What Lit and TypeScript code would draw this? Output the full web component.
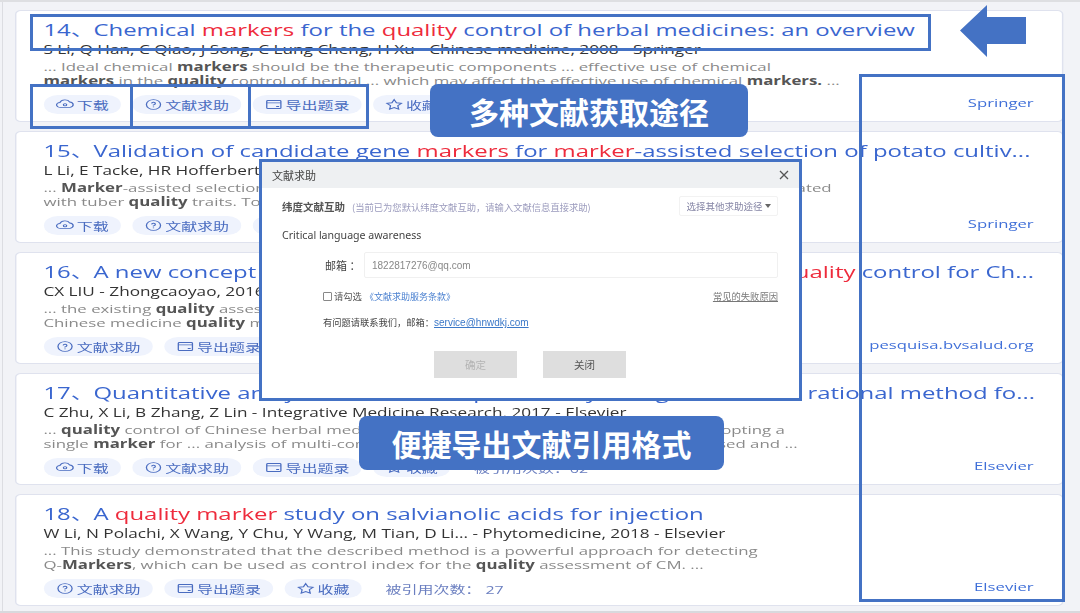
import { LitElement, html, css, svg } from "lit";
import { customElement } from "lit/decorators.js";

type Action = "down" | "help" | "export" | "star";
interface Item {
  n: number; title: string; authors: string; l1: string; l2: string;
  actions: Action[]; cited?: string; source: string;
}

const items: Item[] = [
  { n: 14, title: "Chemical *markers* for the *quality* control of herbal medicines: an overview",
    authors: "S Li, Q Han, C Qiao, J Song, C Lung Cheng, H Xu - Chinese medicine, 2008 - Springer",
    l1: "... Ideal chemical *markers* should be the therapeutic components ... effective use of chemical",
    l2: "*markers* in the *quality* control of herbal ... which may affect the effective use of chemical *markers.* ...",
    actions: ["down", "help", "export", "star"], cited: "被引用次数：540", source: "Springer" },
  { n: 15, title: "Validation of candidate gene *markers* for *marker*-assisted selection of potato cultiv...",
    authors: "L Li, E Tacke, HR Hofferbert, J Lübeck, J Strahwald - Theoretical and Applied Genetics",
    l1: "... *Marker*-assisted selection ... genes and quantitative trait loci that were found to be well associated",
    l2: "with tuber *quality* traits. To ...",
    actions: ["down", "help", "export", "star"], cited: "被引用次数：98", source: "Springer" },
  { n: 16, title: "A new concept on *quality marker* of Chinese materia medica: *Quality* control for Ch...",
    authors: "CX LIU - Zhongcaoyao, 2016 - pesquisa.bvsalud.org",
    l1: "... the existing *quality* assessment system ... based on the concept of the *quality* marker",
    l2: "Chinese medicine *quality* management ...",
    actions: ["help", "export", "star"], cited: "被引用次数：410", source: "pesquisa.bvsalud.org" },
  { n: 17, title: "Quantitative analysis of multi-components by a single *marker*: a rational method fo...",
    authors: "C Zhu, X Li, B Zhang, Z Lin - Integrative Medicine Research, 2017 - Elsevier",
    l1: "... *quality* control of Chinese herbal medicines has been greatly improved by simply adopting a",
    l2: "single *marker* for ... analysis of multi-components in herbal medicines, and was proposed and ...",
    actions: ["down", "help", "export", "star"], cited: "被引用次数：62", source: "Elsevier" },
  { n: 18, title: "A *quality marker* study on salvianolic acids for injection",
    authors: "W Li, N Polachi, X Wang, Y Chu, Y Wang, M Tian, D Li... - Phytomedicine, 2018 - Elsevier",
    l1: "... This study demonstrated that the described method is a powerful approach for detecting",
    l2: "Q-*Markers*, which can be used as control index for the *quality* assessment of CM. ...",
    actions: ["help", "export", "star"], cited: "被引用次数： 27", source: "Elsevier" },
];

const icons: Record<Action, unknown> = {
  down: svg`<path d="M4 11.5a3 3 0 0 1-.3-6A4.4 4.4 0 0 1 12 5a3.3 3.3 0 0 1 .3 6.5z"/><circle cx="8" cy="8.3" r="1.4"/>`,
  help: svg`<circle cx="8" cy="8" r="6"/><path d="M6.4 6.6A1.6 1.6 0 1 1 8 8.4v.8M8 10.6v.9"/>`,
  export: svg`<rect x="2" y="3" width="12" height="10" rx="1"/><path d="M2 6h12M10 10.5h2.5"/>`,
  star: svg`<path d="M8 2l1.9 3.9 4.3.6-3.1 3 .7 4.3L8 11.8l-3.8 2 .7-4.3-3.1-3 4.3-.6z"/>`,
};
const labels: Record<Action, string> = { down: "下载", help: "文献求助", export: "导出题录", star: "收藏" };

function marked(text: string, cls: string) {
  return text.split("*").map((p, i) => (i % 2 ? html`<span class=${cls}>${p}</span>` : p));
}

@customElement("app-root")
export class AppRoot extends LitElement {
  static styles = css`
    :host { display: block; width: 1080px; height: 613px; overflow: hidden; }
    * { box-sizing: border-box; }
    .page {
      position: relative; width: 1080px; height: 613px; overflow: hidden;
      background: #f2f3f7; border-top: 2px solid #dedfe2; border-bottom: 2px solid #d8d9dd;
      font-family: "Open Sans", "Noto Sans CJK SC", sans-serif;
    }
    .page::before { content: ""; position: absolute; left: 2px; top: 0; bottom: 0; width: 1px; background: #dcdde2; }
    .list {
      width: 723px; margin-left: 15px; padding-top: 8px;
      display: flex; flex-direction: column; gap: 9px;
      transform: scaleX(1.45); transform-origin: 0 0; filter: blur(0.35px);
    }
    .card {
      height: 112px; background: #fff; border: 1px solid #dfe2ee; border-radius: 4px;
      padding: 7px 19.5px 0 18.6px; display: flex; justify-content: space-between; min-width: 0;
    }
    .main { flex: 1; min-width: 0; }
    .title { font-size: 16.5px; line-height: 23px; color: #3a66cf; white-space: nowrap; }
    .num { display: inline-block; width: 34.5px; }
    .red { color: #ee2b3c; }
    .authors { font-size: 11.85px; line-height: 16px; color: #333; white-space: nowrap; }
    .snip { font-size: 11.6px; line-height: 14px; color: #8a8a8a; white-space: nowrap; margin-top: 3px; }
    .snip b { color: #555; font-weight: 700; }
    .actions { display: flex; align-items: center; gap: 8px; margin-top: 7px; }
    .btn {
      display: flex; align-items: center; justify-content: center; gap: 2px;
      height: 19px; padding: 0 8px; border-radius: 10px; background: #eff3fd;
      color: #4a6cc0; font-size: 11px; white-space: nowrap;
    }
    .btn svg { width: 13px; height: 13px; fill: none; stroke: currentColor; stroke-width: 1.1; }
    .cited { color: #6b7fc0; font-size: 11px; margin-left: 9px; white-space: nowrap; }
    .source { align-self: flex-end; font-size: 11.5px; line-height: 14px; color: #3f6fd8; margin-bottom: 11px; white-space: nowrap; }

    .mark { position: absolute; border: 3px solid #4472c4; pointer-events: none; }
    .m-title { left: 30px; top: 12px; width: 901px; height: 37px; }
    .m-b1 { left: 30px; top: 82px; width: 103px; height: 45px; }
    .m-b2 { left: 130px; top: 82px; width: 121px; height: 45px; }
    .m-b3 { left: 248px; top: 82px; width: 121px; height: 45px; }
    .m-src { left: 859px; top: 72px; width: 206px; height: 528px; }
    .arrow { position: absolute; left: 960px; top: 3px; width: 67px; height: 52px; }
    .callout {
      position: absolute; background: #4472c4; color: #fff; border-radius: 8px;
      font-family: "Noto Sans CJK SC", sans-serif; font-size: 30px; font-weight: 700;
      display: flex; align-items: center; justify-content: center; white-space: nowrap;
    }
    .c1 { left: 430px; top: 82px; width: 318px; height: 53px; }
    .c2 { left: 359px; top: 414px; width: 365px; height: 54px; }

    .modal {
      position: absolute; left: 259px; top: 157px; width: 543px; height: 242px;
      background: #fff; border: 3px solid #4472c4; color: #555;
      font-family: "Noto Sans CJK SC", sans-serif; font-size: 9.3px;
      filter: blur(0.25px);
    }
    .m-head {
      height: 26px; background: #eef0f2; padding: 0 10px; display: flex;
      align-items: center; justify-content: space-between; font-size: 11px; color: #444;
    }
    .m-head svg { width: 10px; height: 10px; stroke: #555; stroke-width: 1.3; fill: none; }
    .m-body { padding: 8px 21px 0 20px; }
    .m-row { display: flex; align-items: center; justify-content: space-between; height: 20px; }
    .m-name { font-weight: 700; font-size: 10.5px; color: #555; }
    .m-hint { font-size: 9.3px; color: #9b9bbd; margin-left: 7px; }
    .select {
      width: 99px; height: 20px; border: 1px solid #f2f2f2; border-radius: 2px; color: #8585a5;
      font-size: 9.5px; display: flex; align-items: center; justify-content: center; gap: 2px;
    }
    .caret { width: 0; height: 0; border: 3.5px solid transparent; border-top: 4px solid #666; border-bottom: 0; }
    .doc { font-family: "Noto Sans", sans-serif; font-size: 10.6px; color: #444; margin-top: 9px; line-height: 20px; }
    .field { display: flex; align-items: center; margin-top: 7px; }
    .label { width: 82px; padding-left: 43px; font-size: 11px; color: #444; white-space: nowrap; }
    .input {
      flex: 1; height: 26px; border: 1px solid #f0f0f0; border-radius: 2px; padding-left: 7px;
      display: flex; align-items: center; color: #888; font-family: "Liberation Sans", sans-serif; font-size: 10px;
    }
    .inner { margin-left: 41px; }
    .agree { display: flex; align-items: center; justify-content: space-between; margin-top: 9px; height: 18px; }
    .agree-l { display: flex; align-items: center; gap: 2px; color: #555; }
    .box { width: 9px; height: 9px; border: 1px solid #888; border-radius: 1px; }
    .link { color: #4a80d0; font-size: 9px; margin-left: 1px; }
    .fail { color: #777; text-decoration: underline; }
    .contact { margin-top: 9px; line-height: 16px; color: #444; font-size: 9.25px; }
    .contact a { color: #3b78c8; text-decoration: underline; font-family: "Liberation Sans", sans-serif; font-size: 10px; }
    .m-btns { display: flex; gap: 26px; margin: 20px 0 0 152px; }
    .m-btn {
      width: 83px; height: 27px; background: #dedede; display: flex; align-items: center;
      justify-content: center; font-size: 10.5px; color: #555;
    }
    .m-btn.off { color: #b4b4b4; }
  `;

  private card(it: Item) {
    return html`<article class="card">
      <div class="main">
        <div class="title"><span class="num">${it.n}、</span>${marked(it.title, "red")}</div>
        <div class="authors">${it.authors}</div>
        <div class="snip">
          ${it.l1.split("*").map((p, i) => (i % 2 ? html`<b>${p}</b>` : p))}<br />
          ${it.l2.split("*").map((p, i) => (i % 2 ? html`<b>${p}</b>` : p))}
        </div>
        <div class="actions">
          ${it.actions.map(
            (a) => html`<span class="btn"><svg viewBox="0 0 16 16">${icons[a]}</svg>${labels[a]}</span>`
          )}
          ${it.cited ? html`<span class="cited">${it.cited}</span>` : ""}
        </div>
      </div>
      <div class="source">${it.source}</div>
    </article>`;
  }

  render() {
    return html`<div class="page">
      <section class="list">${items.map((it) => this.card(it))}</section>

      <div class="mark m-title"></div>
      <div class="mark m-b1"></div>
      <div class="mark m-b2"></div>
      <div class="mark m-b3"></div>
      <div class="mark m-src"></div>
      <svg class="arrow" viewBox="0 0 67 52"><path d="M0 25.5 27 0V12H66V39H27V52z" fill="#4472c4" /></svg>
      <div class="callout c1">多种文献获取途径</div>

      <div class="modal">
        <div class="m-head">
          <span>文献求助</span>
          <svg viewBox="0 0 10 10"><path d="M1 1l8 8M9 1l-8 8" /></svg>
        </div>
        <div class="m-body">
          <div class="m-row">
            <div><span class="m-name">纬度文献互助</span><span class="m-hint">(当前已为您默认纬度文献互助，请输入文献信息直接求助)</span></div>
            <div class="select">选择其他求助途径<i class="caret"></i></div>
          </div>
          <div class="doc">Critical language awareness</div>
          <div class="field"><span class="label">邮箱 ：</span><div class="input">1822817276@qq.com</div></div>
          <div class="inner">
            <div class="agree">
              <div class="agree-l"><i class="box"></i>请勾选 <span class="link">《文献求助服务条款》</span></div>
              <span class="fail">常见的失败原因</span>
            </div>
            <div class="contact">有问题请联系我们，邮箱：<a>service@hnwdkj.com</a></div>
          </div>
          <div class="m-btns">
            <div class="m-btn off">确定</div>
            <div class="m-btn">关闭</div>
          </div>
        </div>
      </div>

      <div class="callout c2">便捷导出文献引用格式</div>
    </div>`;
  }
}
